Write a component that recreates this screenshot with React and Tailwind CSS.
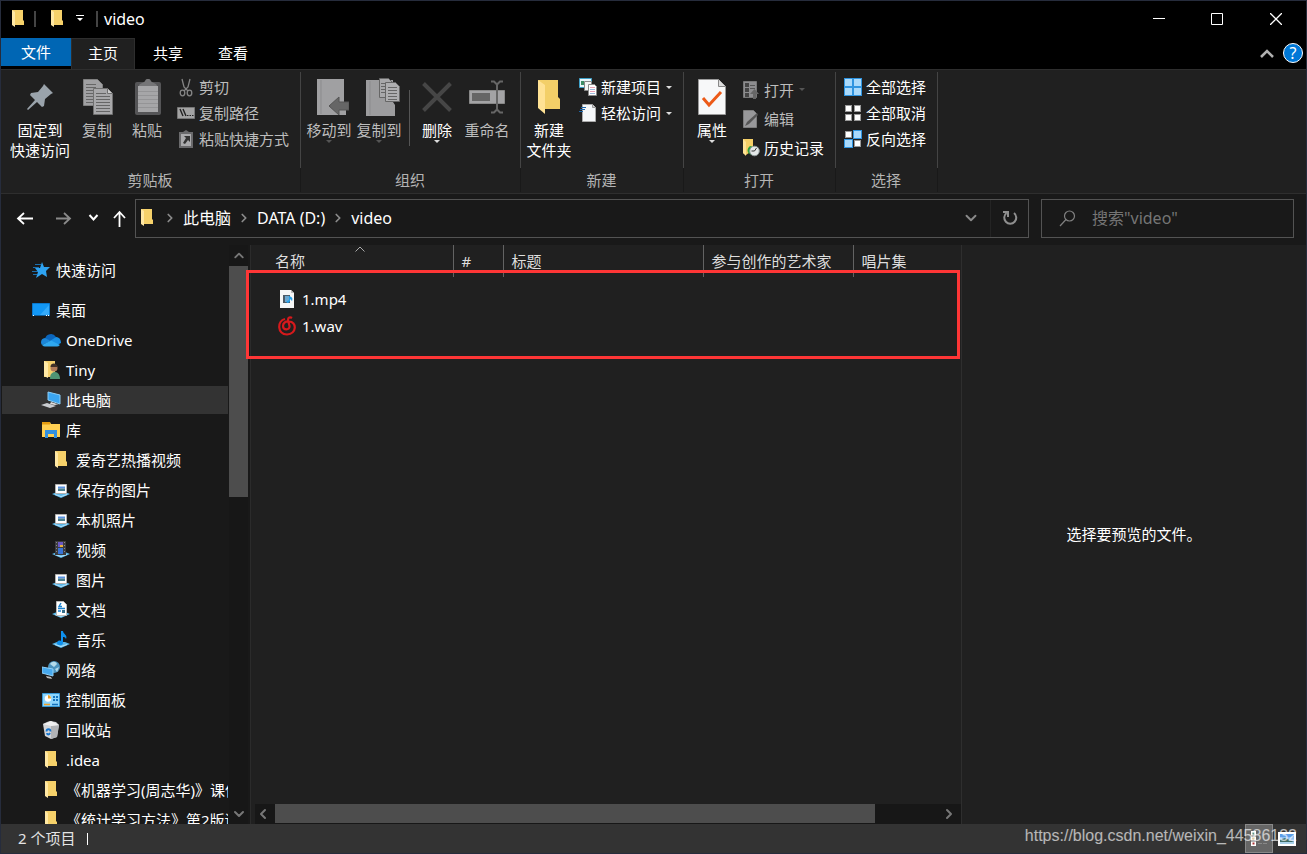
import { ChevronDown, ChevronLeft, ChevronRight, ChevronUp } from "lucide-react";

/* ---------- icons ---------- */

function FolderIcon() {
  return (
    <svg width="14" height="18" viewBox="0 0 14 18">
      <path d="M1 0h11v10l1 1v4H4z" fill="#f6d16a" />
      <path d="M1 0l3 2v15l-3-2z" fill="#ffe8a4" />
    </svg>
  );
}

function BigFolderIcon() {
  return (
    <svg width="24" height="36" viewBox="0 0 24 36">
      <path d="M1 1h20v17l2 2v10H7z" fill="#f3cf68" />
      <path d="M1 1l7 5v29l-7-6z" fill="#ffe294" />
    </svg>
  );
}

function PinIcon() {
  return (
    <svg width="28" height="28" viewBox="0 0 28 28" fill="#9aa3ab">
      <path d="M18 1l9 9-2 1-6 5-1 7-2 1-5-5-9 8-1-1 8-9-5-5 1-2 7-1 5-6z" />
    </svg>
  );
}

function SheetLines({ x, y, w, n }) {
  return Array.from({ length: n }, (_, i) => (
    <path key={i} d={`M${x} ${y + i * 3}h${w}`} stroke="#666" />
  ));
}

function CopyIcon() {
  return (
    <svg width="30" height="36" viewBox="0 0 30 36" className="ml-[2px]">
      <path d="M.5.5h14l5 5v21H.5z" fill="#a0a0a2" stroke="#808080" />
      <SheetLines x={3} y={5.5} w={10} n={7} />
      <path d="M10.500 9.500h14l5 5v21h-19z" fill="#a8a8aa" stroke="#707070" />
      <path d="M24.500 9.500v5h5" fill="#ccc" stroke="#707070" />
      <SheetLines x={13} y={14.500} w={10} n={1} />
      <SheetLines x={13} y={17.500} w={14} n={6} />
    </svg>
  );
}

function PasteIcon() {
  return (
    <svg width="26" height="36" viewBox="0 0 26 36" className="ml-[2px]">
      <rect y="3" width="26" height="33" rx="2" fill="#555557" />
      <path d="M3 7h20v26H3z" fill="#a6a6a8" />
      <path d="M4 7c0-3 5-3 6-5 1-3 5-3 6 0 1 2 6 2 6 5z" fill="#757577" />
      <path d="M3 12.500h20M3 16.500h20M3 20.500h20M3 24.500h20M3 28.500h20" stroke="#949496" />
    </svg>
  );
}

function CutIcon() {
  return (
    <svg width="14" height="19" viewBox="0 0 14 19" fill="none" stroke="#858585" strokeWidth="1.300">
      <path d="M3 1l2 8 4 4M11 1L9 9l-4 4" />
      <ellipse cx="3.500" cy="15" rx="2.300" ry="2.800" />
      <ellipse cx="10.500" cy="15" rx="2.300" ry="2.800" />
    </svg>
  );
}

function CopyPathIcon() {
  return (
    <svg width="18" height="12" viewBox="0 0 18 12">
      <path d="M.5.5h17v11H.5z" fill="#a3a3a3" stroke="#777" />
      <path d="M3 2l3 7M6 2l3 7" stroke="#222" strokeWidth="1.400" />
      <path d="M10 8.500h1.500m1 0H14m1 0h1.500" stroke="#222" />
    </svg>
  );
}

function PasteShortcutIcon() {
  return (
    <svg width="14" height="18" viewBox="0 0 14 18">
      <path d="M0 2h4l3-2 3 2h4v16H0z" fill="#6a6a6c" />
      <path d="M2 4h10v12H2z" fill="#aaaaac" />
      <path d="M5 6h6v6L9 10l-3 4-2-1 3-5z" fill="#333" />
    </svg>
  );
}

function MoveToIcon() {
  return (
    <svg width="32" height="36" viewBox="0 0 32 36" className="ml-2 shrink-0">
      <path d="M0 0h27v24l2 2v10H0z" fill="#a0a0a2" />
      <path d="M4 1v34" stroke="#8b8b8d" />
      <path d="M12 27l10-9v5h10v8H22v5z" fill="#666" stroke="#555" />
    </svg>
  );
}

function CopyToIcon() {
  return (
    <svg width="34" height="38" viewBox="0 0 34 38" className="ml-2 shrink-0">
      <path d="M0 2h27v22l2 3v11H0z" fill="#9c9c9e" />
      <path d="M4 3v34" stroke="#8b8b8d" />
      <path d="M13.500.5h9l5 5v14h-14z" fill="#a8a8aa" stroke="#666" />
      <SheetLines x={15} y={5.500} w={4} n={4} />
      <path d="M19.500 4.500h10l4 4v15h-14z" fill="#aeaeb0" stroke="#666" />
      <SheetLines x={22} y={9.500} w={9} n={5} />
    </svg>
  );
}

function DeleteIcon() {
  return (
    <svg width="30" height="30" viewBox="0 0 30 30" stroke="#464646" strokeWidth="4">
      <path d="M1.500 1.500l27 27M28.500 1.500l-27 27" />
    </svg>
  );
}

function RenameIcon() {
  return (
    <svg width="36" height="34" viewBox="0 0 36 34" fill="none">
      <path d="M.5 10.500h35v13H.5z" fill="#a3a3a5" stroke="#888" />
      <path d="M3 13h18v8H3z" fill="#666" />
      <path d="M22 1.500h3l3 3 3-3h3M22 32.500h3l3-3 3 3h3M28 4v26" stroke="#666" strokeWidth="2" />
    </svg>
  );
}

function NewItemIcon() {
  return (
    <svg width="18" height="18" viewBox="0 0 18 18">
      <path d="M.5.5h12v9H.5z" fill="#e9f6fb" stroke="#3ea0c8" />
      <path d="M2 3h3v4H2z" fill="#3c8c64" />
      <path d="M5.500 3.500h7v9h-7z" fill="#f4f4f4" stroke="#888" />
      <path d="M9.500 6.500h6l2 2v9h-8z" fill="#fff" stroke="#888" />
      <path d="M11 9.500h5M11 13.500h5" stroke="#e9a0b4" />
      <path d="M11 11.500h5M11 15.500h5" stroke="#9bb8dc" />
    </svg>
  );
}

function EasyAccessIcon() {
  return (
    <svg width="18" height="18" viewBox="0 0 18 18">
      <path d="M3.500.5h10l3 3v14h-13z" fill="#f5f7f9" stroke="#aaa" />
      <path d="M13.500.5v3h3" fill="#ccc" stroke="#999" />
      <path d="M2 3.500h5M1 5.500h5M0 7.500h4" stroke="#1d64a8" />
    </svg>
  );
}

function PropertiesIcon() {
  return (
    <svg width="28" height="36" viewBox="0 0 28 36">
      <path d="M.5.5h20l7 7v28H.5z" fill="#f7f8f9" stroke="#9a9a9a" />
      <path d="M20.500.5v7h7" fill="#ddd" stroke="#888" />
      <path d="M5 19l6 7 12-13" fill="none" stroke="#ec5a18" strokeWidth="3" />
    </svg>
  );
}

function OpenIcon() {
  return (
    <svg width="16" height="18" viewBox="0 0 16 18">
      <path d="M.5.500h13v16H.5z" fill="#8d8d8f" stroke="#777" />
      <path d="M2 2h4v4H2zM2 7h4v4H2zM2 12h4v4H2z" fill="#444" />
      <path d="M7 4.500h5M7 7.500h5" stroke="#555" />
      <path d="M11.500 8l4.500 5h-3v5h-3v-5H7z" fill="#666" />
    </svg>
  );
}

function EditIcon() {
  return (
    <svg width="16" height="18" viewBox="0 0 16 18">
      <path d="M.5.500h10l3 3v14H.5z" fill="#98989a" stroke="#7c7c7c" />
      <path d="M2 16l2-4 10-9 1 2-9 9z" fill="#555" />
    </svg>
  );
}

function HistoryIcon() {
  return (
    <svg width="18" height="18" viewBox="0 0 18 18">
      <path d="M1 0h10v11l-7 5-3-2z" fill="#f5cf66" />
      <path d="M1 0l3 3v14l-3-3z" fill="#ffe394" />
      <path d="M8 7c-4 3-3 8 2 9l2-8z" fill="#2aa13c" />
      <circle cx="12.500" cy="12" r="4.800" fill="#e4e8e8" stroke="#8d9898" />
      <path d="M12.500 12l2-3M12.500 12h-3" stroke="#333" />
    </svg>
  );
}

const TILES = [[1, 1], [10, 1], [1, 10], [10, 10]];

function SelectIcon({ selected }) {
  return (
    <svg width="18" height="18" viewBox="0 0 18 18">
      {TILES.map(([x, y], i) =>
        selected.includes(i) ? (
          <g key={i}>
            <rect x={x - 1} y={y - 1} width="9" height="9" fill="#2f94e0" />
            <rect x={x} y={y} width="7" height="7" fill="#a9d9fb" />
          </g>
        ) : (
          <rect key={i} x={x + 0.5} y={y + 0.5} width="6" height="6" fill="#fff" stroke="#999" />
        )
      )}
    </svg>
  );
}

function QuickAccessIcon() {
  return (
    <svg width="18" height="16" viewBox="0 0 18 16">
      <path d="M3 2.500h6M1 5.500h6M0 9.500h6M1 12.500h4" stroke="#1b6fae" />
      <path d="M10 0l2 5h6l-4 4 1 6-5-3-6 4 2-6-3-4h5z" fill="#2ea3f2" />
    </svg>
  );
}

function DesktopIcon() {
  return (
    <svg width="18" height="14" viewBox="0 0 18 14">
      <path d="M.5.500h17v12H.5z" fill="#1297f5" stroke="#0a78cc" />
      <path d="M8 12L17 2v10z" fill="#35abfb" />
      <path d="M1 12.500h16" stroke="#0c5e9e" />
      <path d="M1 12.500h1m12 0h1m1 0h1" stroke="#fff" />
    </svg>
  );
}

function OneDriveIcon() {
  return (
    <svg width="20" height="14" viewBox="0 0 20 14">
      <path d="M4 6a6 6 0 0 1 11-2l-2 5z" fill="#0b66bd" />
      <path d="M4 5c-4 0-5 5-3 7l9-4z" fill="#1b86d8" />
      <path d="M9 8l6-4c4 0 5 4 5 6l-4 2z" fill="#1a8fe4" />
      <path d="M1 12l9-4.500L19 12c-1 1-2 1.500-3 1.500H4C3 13.500 2 13 1 12z" fill="#2fa8f0" />
    </svg>
  );
}

function UserFolderIcon() {
  return (
    <svg width="18" height="18" viewBox="0 0 18 18">
      <path d="M2 0h11v16H2z" fill="#f5d06d" />
      <path d="M2 0l4 2v15l-4-2z" fill="#ffe9a6" />
      <path d="M8 18c0-5 2-7 5-7s5 3 5 7z" fill="#4f9474" />
      <circle cx="12" cy="7" r="3.500" fill="#b07a58" />
      <path d="M8.500 6c0-5 7-4 7 0z" fill="#3f3028" />
    </svg>
  );
}

function ThisPcIcon() {
  return (
    <svg width="20" height="18" viewBox="0 0 20 18">
      <path d="M7 1l12 3v9L7 9z" fill="#3ba5f0" stroke="#8ccdf5" />
      <path d="M10 11l6 2 2 0-4 1-5-1z" fill="#ddd" />
      <path d="M0 14l6-2 9 3-6 2z" fill="#c9ccd0" />
    </svg>
  );
}

function LibraryIcon() {
  return (
    <svg width="18" height="16" viewBox="0 0 18 16">
      <path d="M0 0h8l1 2h9v13H0z" fill="#ffcf52" />
      <path d="M0 0h8v2.500H0z" fill="#e39b10" />
      <path d="M3 8h12v8h-3v-4H6v4H3z" fill="#3290df" />
    </svg>
  );
}

function Tray() {
  return (
    <>
      <path d="M0 13l5-2h8l5 2-9 4z" fill="#58b6e8" />
      <path d="M3 13.500l6 2 6-2" fill="none" stroke="#b3e2fa" />
    </>
  );
}

function PictureLibIcon() {
  return (
    <svg width="18" height="18" viewBox="0 0 18 18">
      <Tray />
      <path d="M3.500 3.500h11v9h-11z" fill="#fff" stroke="#b0b0b0" />
      <path d="M5 5h8v6H5z" fill="#fff" />
      <path d="M6 5.500h7v2H6z" fill="#5a92e4" />
      <path d="M6 7.500h7V10H6z" fill="#4b8190" />
    </svg>
  );
}

function VideoLibIcon() {
  return (
    <svg width="18" height="18" viewBox="0 0 18 18">
      <Tray />
      <path d="M3 0h11v14H3z" fill="#3c3c3e" />
      <path d="M6 1h5v5H6z" fill="#6a58c4" />
      <path d="M8 4h3v2H8z" fill="#e7b13a" />
      <path d="M6 7h5v6H6z" fill="#3873d4" />
      <path d="M4.500 1v12M12.500 1v12" stroke="#888" strokeDasharray="1 2" />
    </svg>
  );
}

function DocLibIcon() {
  return (
    <svg width="18" height="18" viewBox="0 0 18 18">
      <Tray />
      <path d="M4.500.500h7l3 3v11h-10z" fill="#fff" stroke="#bbb" />
      <path d="M9 2L7 5.500h3M6 7.500h7M6 10h3" fill="none" stroke="#1d83d0" strokeWidth="1.400" />
      <path d="M10 9h3v3h-3z" fill="#356d8a" />
    </svg>
  );
}

function MusicLibIcon() {
  return (
    <svg width="18" height="18" viewBox="0 0 18 18">
      <Tray />
      <path d="M9 0h2c0 3 5 4 3 8-1-2-2-2-3-2v6c0 3-6 3-6 0 0-2 2-3 4-2z" fill="#0e90ee" />
    </svg>
  );
}

function NetworkIcon() {
  return (
    <svg width="18" height="18" viewBox="0 0 18 18">
      <circle cx="12" cy="6" r="6" fill="#4c93bd" />
      <path d="M8 3c2-3 6-3 7 0l-3 3zM13 8l4-2-2 5z" fill="#b4dbea" />
      <path d="M0 6l11 2v7L0 12z" fill="#47a9ee" stroke="#8fd0f8" />
      <path d="M4 15l5 1 1 2-5-1z" fill="#bbb" />
    </svg>
  );
}

function ControlPanelIcon() {
  return (
    <svg width="18" height="14" viewBox="0 0 18 14">
      <path d="M.5.500h17v13H.5z" fill="#8dd5fb" stroke="#3798d6" />
      <circle cx="6" cy="5.500" r="3.200" fill="#fff" />
      <path d="M6 2a3.500 3.500 0 0 1 3 3.500H6z" fill="#f0a024" />
      <path d="M11 3h2v2h-2zM14 3h2v2h-2zM11 6h2v2h-2zM14 6h2v2h-2z" fill="#1573bd" />
      <path d="M2 11.500h6" stroke="#f0a024" strokeWidth="1.500" />
      <path d="M10 11.500h6" stroke="#1573bd" strokeWidth="1.500" />
    </svg>
  );
}

function RecycleIcon() {
  return (
    <svg width="16" height="18" viewBox="0 0 16 18">
      <path d="M0 3l4-2 3-1 6 1 3 3-2 12-6 2-6-3z" fill="#d3d5d8" />
      <path d="M8 5l8-1-2 12-6 2z" fill="#b1b3b6" />
      <path d="M0 3l8 2 8-1-4-2-4-2-4 2z" fill="#f0f0f0" />
      <path d="M3.500 10.500c0-3 4-3 4 0M7 12c-1 2-3 2-3 0" fill="none" stroke="#1574ce" strokeWidth="1.800" />
    </svg>
  );
}

function Mp4Icon() {
  return (
    <svg width="14" height="18" viewBox="0 0 14 18">
      <path d="M0 0h11l3 3v15H0z" fill="#f6f6f6" />
      <path d="M11 0v3h3z" fill="#bbb" />
      <path d="M3 5h7v8H3z" fill="#4c5b68" />
      <path d="M5 6h4v6H5z" fill="#6ba6cf" />
      <path d="M9 6c3 1 4 2 3 5l-2-2v2c-1 3-5 2-3 0l2-1z" fill="#28a0e8" />
    </svg>
  );
}

function NetEaseIcon() {
  return (
    <svg width="18" height="20" viewBox="0 0 18 20" fill="none" stroke="#d6191c" strokeWidth="2.200">
      <path d="M7 3C-1 5-1 18 9 18.500c10-.5 10-13 2-13-4-.5-6 2-6 4.500 0 4.500 7 4.500 6.500 0L10 4c0-2.500 2-3.500 4-2" />
    </svg>
  );
}

function DetailsViewIcon() {
  return (
    <svg width="18" height="18" viewBox="0 0 18 18">
      <path d="M1 1h5v15H1z" fill="#fff" />
      <path d="M2.500 2.500h2v2h-2z" fill="#4d7a55" />
      <path d="M2.500 7.500h2v2h-2z" fill="#c89430" />
      <path d="M2.500 12.500h2v2h-2z" fill="#a93333" />
      <path d="M1 6h5M1 11h5" stroke="#666" />
      <path d="M8 13.500h4m1 0h4" stroke="#888" />
    </svg>
  );
}

function PreviewViewIcon() {
  return (
    <svg width="18" height="14" viewBox="0 0 18 14">
      <path d="M1 1h16v12H1z" fill="#8fc0f2" stroke="#fff" strokeWidth="2" />
      <path d="M2 2h14v3H2z" fill="#5c9de8" />
      <path d="M2 8l5-2 9 4v1H2z" fill="#406d66" />
      <path d="M2 10h14v2H2z" fill="#a9d2ea" />
    </svg>
  );
}

function NavArrow({ d, color }) {
  return (
    <svg width="17" height="17" viewBox="0 0 17 17" fill="none" stroke={color} strokeWidth="1.800">
      <path d={d} />
    </svg>
  );
}

function Caret({ className }) {
  return (
    <svg width="6" height="3" viewBox="0 0 6 3" className={className}>
      <path d="M0 0h6L3 3z" fill="currentColor" />
    </svg>
  );
}

/* ---------- ribbon ---------- */

function RibbonGroup({ label, className, children }) {
  return (
    <section aria-label={label} className={`flex shrink-0 flex-col ${className}`}>
      <div className="mt-[2px] flex h-24 border-r border-[#444]">{children}</div>
      <div className="mb-px flex flex-1 items-center justify-center border-r border-[#191919] pr-px text-[#b4b4b4]">
        {label}
      </div>
    </section>
  );
}

function BigButton({ icon, lines, disabled, caret, className }) {
  return (
    <button
      type="button"
      disabled={disabled}
      className={`flex shrink-0 flex-col items-center pt-[2px] leading-5 ${disabled ? "text-[#bdbdbd]" : "text-white"} ${className}`}
    >
      <span className="flex h-[46px] items-center justify-center">{icon}</span>
      {lines.map((line) => (
        <span key={line} className="whitespace-nowrap">{line}</span>
      ))}
      {caret ? <Caret className={disabled ? "text-[#555]" : "text-[#ddd]"} /> : null}
    </button>
  );
}

function SmallButton({ icon, label, disabled, caret, className = "h-[26px]" }) {
  return (
    <button
      type="button"
      disabled={disabled}
      className={`flex items-center gap-1 whitespace-nowrap ${disabled ? "text-[#bdbdbd]" : "text-white"} ${className}`}
    >
      <span className="flex w-[18px] justify-center">{icon}</span>
      {label}
      {caret ? <Caret className={`ml-px ${disabled ? "text-[#555]" : "text-[#ddd]"}`} /> : null}
    </button>
  );
}

function Ribbon() {
  return (
    <div className="flex h-[125px] shrink-0 overflow-hidden border-y border-[#2e2e2e] bg-[#202020]">
      <RibbonGroup label="剪贴板" className="w-[300px]">
        <BigButton icon={<PinIcon />} lines={["固定到", "快速访问"]} className="ml-[7px] w-16" />
        <BigButton icon={<CopyIcon />} lines={["复制"]} disabled className="w-[50px]" />
        <BigButton icon={<PasteIcon />} lines={["粘贴"]} disabled className="w-[50px]" />
        <div className="ml-[5px] flex flex-col pt-[2px]">
          <SmallButton icon={<CutIcon />} label="剪切" disabled />
          <SmallButton icon={<CopyPathIcon />} label="复制路径" disabled />
          <SmallButton icon={<PasteShortcutIcon />} label="粘贴快捷方式" disabled />
        </div>
      </RibbonGroup>

      <RibbonGroup label="组织" className="w-[220px]">
        <BigButton icon={<MoveToIcon />} lines={["移动到"]} disabled caret className="ml-[3px] w-[50px]" />
        <BigButton icon={<CopyToIcon />} lines={["复制到"]} disabled caret className="w-[50px]" />
        <div className="ml-[5px] mr-[2px] mt-[18px] h-14 w-px bg-[#555]" />
        <BigButton icon={<DeleteIcon />} lines={["删除"]} caret className="w-[50px]" />
        <BigButton icon={<RenameIcon />} lines={["重命名"]} disabled className="w-[50px]" />
      </RibbonGroup>

      <RibbonGroup label="新建" className="w-[163px]">
        <BigButton icon={<BigFolderIcon />} lines={["新建", "文件夹"]} className="ml-[2px] w-[52px]" />
        <div className="ml-1 flex flex-col pt-[2px]">
          <SmallButton icon={<NewItemIcon />} label="新建项目" caret />
          <SmallButton icon={<EasyAccessIcon />} label="轻松访问" caret />
        </div>
      </RibbonGroup>

      <RibbonGroup label="打开" className="w-[152px]">
        <BigButton icon={<PropertiesIcon />} lines={["属性"]} caret className="ml-[2px] w-[52px]" />
        <div className="ml-1 flex flex-col pt-[3px]">
          <SmallButton icon={<OpenIcon />} label="打开" disabled caret className="h-[29px]" />
          <SmallButton icon={<EditIcon />} label="编辑" disabled className="h-[29px]" />
          <SmallButton icon={<HistoryIcon />} label="历史记录" className="h-[29px]" />
        </div>
      </RibbonGroup>

      <RibbonGroup label="选择" className="w-[102px]">
        <div className="ml-2 flex flex-col pt-[2px]">
          <SmallButton icon={<SelectIcon selected={[0, 1, 2, 3]} />} label="全部选择" />
          <SmallButton icon={<SelectIcon selected={[]} />} label="全部取消" />
          <SmallButton icon={<SelectIcon selected={[1, 2]} />} label="反向选择" />
        </div>
      </RibbonGroup>
    </div>
  );
}

/* ---------- window chrome ---------- */

function TitleBar() {
  return (
    <header className="flex h-[37px] shrink-0 items-center bg-black pb-[2px]">
      <div className="flex items-center pl-[10px]">
        <FolderIcon />
        <div className="ml-[9px] h-4 w-[2px] bg-[#444]" />
        <button type="button" aria-label="新建文件夹" className="ml-[14px]">
          <FolderIcon />
        </button>
        <button type="button" aria-label="自定义快速访问工具栏" className="ml-3">
          <svg width="8" height="7" viewBox="0 0 8 7" fill="#fff">
            <path d="M0 0h8v1H0zM1 3h6L4 6z" />
          </svg>
        </button>
        <div className="ml-3 h-4 w-[2px] bg-[#444]" />
        <h1 className="ml-[6px] text-base">video</h1>
      </div>
      <div className="ml-auto flex self-stretch">
        <button type="button" aria-label="最小化" className="flex w-[58px] items-center justify-center">
          <svg width="12" height="12" stroke="#fff"><path d="M0 5.500h12" /></svg>
        </button>
        <button type="button" aria-label="最大化" className="flex w-[58px] items-center justify-center">
          <svg width="12" height="12" fill="none" stroke="#fff"><path d="M.5.500h11v11H.5z" /></svg>
        </button>
        <button type="button" aria-label="关闭" className="flex w-[60px] items-center justify-center">
          <svg width="12" height="12" stroke="#fff" strokeWidth="1.300"><path d="M0 0l12 12M12 0L0 12" /></svg>
        </button>
      </div>
    </header>
  );
}

function TabBar() {
  return (
    <nav className="flex h-[31px] shrink-0 items-start bg-black">
      <button type="button" className="h-7 w-[70px] bg-[#0066b4]">文件</button>
      <button type="button" className="-mb-px h-8 w-16 border border-b-0 border-[#2e2e2e] bg-[#202020] pb-[3px]">主页</button>
      <button type="button" className="h-[30px] w-[66px]">共享</button>
      <button type="button" className="h-[30px] w-16">查看</button>
      <div className="ml-auto flex h-[30px] items-center gap-[9px] pr-[3px]">
        <button type="button" aria-label="最小化功能区">
          <svg width="14" height="9" fill="none" stroke="#b0b0b0" strokeWidth="2.500"><path d="M1 8l6-6 6 6" /></svg>
        </button>
        <button
          type="button"
          aria-label="帮助"
          className="flex size-5 items-center justify-center rounded-full border border-white bg-[#0078d7] text-base"
        >
          ?
        </button>
      </div>
    </nav>
  );
}

function AddressBar() {
  return (
    <div className="flex h-[51px] shrink-0 items-center pb-[3px] pr-3">
      <div className="flex w-[134px] items-center pl-[15px]">
        <button type="button" aria-label="后退"><NavArrow d="M17 8.500H2M8 3L2 8.500 8 14" color="#fff" /></button>
        <button type="button" aria-label="前进" className="ml-[22px]">
          <NavArrow d="M1 8.500h14M9 3l6 5.500L9 14" color="#8a8a8a" />
        </button>
        <button type="button" aria-label="最近浏览的位置" className="ml-4">
          <svg width="11" height="8" fill="none" stroke="#fff" strokeWidth="2"><path d="M1.500 1l4 4.500 4-4.500" /></svg>
        </button>
        <button type="button" aria-label="上移" className="ml-3">
          <NavArrow d="M8.500 17V2M3 8l5.500-6L14 8" color="#fff" />
        </button>
      </div>
      <div className="flex h-[39px] min-w-0 flex-1 items-center border border-[#535353] pl-1">
        <FolderIcon />
        <nav aria-label="路径" className="ml-[3px] flex">
          {["此电脑", "DATA (D:)", "video"].map((crumb) => (
            <span key={crumb} className="flex items-center">
              <ChevronRight size={14} strokeWidth={3} color="#8a8a8a" className="mx-[6px]" />
              <a href="#" className="whitespace-nowrap text-base">{crumb}</a>
            </span>
          ))}
        </nav>
        <button type="button" aria-label="以前的位置" className="ml-auto flex h-full w-[38px] items-center justify-center">
          <ChevronDown size={18} strokeWidth={2.5} color="#8a8a8a" />
        </button>
        <button
          type="button"
          aria-label="刷新"
          className="flex h-full w-[38px] items-center justify-center border-l border-[#242424]"
        >
          <svg width="16" height="16" viewBox="0 0 16 16" fill="none" stroke="#8f8f8f" strokeWidth="2">
            <path d="M12 3A6 6 0 1 1 4.500 3" />
            <path d="M1 2h5v5" />
          </svg>
        </button>
      </div>
      <label className="ml-3 flex h-[39px] w-[253px] items-center border border-[#535353] pl-[17px]">
        <svg width="17" height="17" viewBox="0 0 17 17" fill="none" stroke="#808080" strokeWidth="1.200" className="shrink-0">
          <circle cx="10.500" cy="6" r="5" />
          <path d="M7 9.500L1 16" />
        </svg>
        <input
          type="search"
          aria-label="搜索"
          placeholder={'搜索"video"'}
          className="ml-4 w-full min-w-0 bg-transparent text-base outline-none placeholder:text-[#757575]"
        />
      </label>
    </div>
  );
}

/* ---------- panes ---------- */

const TREE = [
  { label: "快速访问", icon: <QuickAccessIcon />, level: 0, spaced: true },
  { label: "桌面", icon: <DesktopIcon />, level: 0 },
  { label: "OneDrive", icon: <OneDriveIcon />, level: 1 },
  { label: "Tiny", icon: <UserFolderIcon />, level: 1 },
  { label: "此电脑", icon: <ThisPcIcon />, level: 1, selected: true },
  { label: "库", icon: <LibraryIcon />, level: 1 },
  { label: "爱奇艺热播视频", icon: <FolderIcon />, level: 2 },
  { label: "保存的图片", icon: <PictureLibIcon />, level: 2 },
  { label: "本机照片", icon: <PictureLibIcon />, level: 2 },
  { label: "视频", icon: <VideoLibIcon />, level: 2 },
  { label: "图片", icon: <PictureLibIcon />, level: 2 },
  { label: "文档", icon: <DocLibIcon />, level: 2 },
  { label: "音乐", icon: <MusicLibIcon />, level: 2 },
  { label: "网络", icon: <NetworkIcon />, level: 1 },
  { label: "控制面板", icon: <ControlPanelIcon />, level: 1 },
  { label: "回收站", icon: <RecycleIcon />, level: 1 },
  { label: ".idea", icon: <FolderIcon />, level: 1 },
  { label: "《机器学习(周志华)》课件", icon: <FolderIcon />, level: 1 },
  { label: "《统计学习方法》第2版课件", icon: <FolderIcon />, level: 1 },
];

const INDENT = ["pl-[29px]", "pl-[39px]", "pl-[49px]"];

function Sidebar() {
  return (
    <aside className="flex w-[250px] shrink-0 border-r border-[#2b2b2b]">
      <ul className="flex min-w-0 flex-1 flex-col gap-[2px] overflow-hidden pl-px pr-px pt-[11px]">
        {TREE.map((item) => (
          <li key={item.label} className={item.spaced ? "mb-[10px]" : ""}>
            <a
              href="#"
              className={`flex h-7 items-center gap-[5px] overflow-hidden whitespace-nowrap ${INDENT[item.level]} ${item.selected ? "bg-[#333]" : ""}`}
            >
              <span className="flex w-5 shrink-0 justify-center">{item.icon}</span>
              {item.label}
            </a>
          </li>
        ))}
      </ul>
      <div className="mr-[2px] flex w-[19px] shrink-0 flex-col items-center bg-[#171717]">
        <ChevronUp size={16} strokeWidth={3} color="#777" className="my-[3px] h-[15px] shrink-0" />
        <div className="h-[231px] w-full bg-[#4d4d4d]" />
        <ChevronDown size={16} strokeWidth={3} color="#777" className="mb-[2px] mt-auto shrink-0" />
      </div>
    </aside>
  );
}

const FILES = [
  { name: "1.mp4", icon: <Mp4Icon /> },
  { name: "1.wav", icon: <NetEaseIcon /> },
];

function FileList() {
  return (
    <main className="relative flex min-w-0 flex-1 flex-col bg-[#202020]">
      <table className="w-full table-fixed border-collapse text-left">
        <colgroup>
          <col className="w-[202px]" />
          <col className="w-[50px]" />
          <col className="w-[200px]" />
          <col className="w-[150px]" />
          <col />
        </colgroup>
        <thead>
          <tr className="h-8 text-[#dedede]">
            <th className="relative border-r border-[#636363] pl-6 font-normal">
              名称
              <svg width="10" height="6" fill="none" stroke="#aaa" className="absolute left-[104px] top-px">
                <path d="M.5 5.500L5 1l4.500 4.500" />
              </svg>
            </th>
            <th className="border-r border-[#636363] pl-2 font-normal">#</th>
            <th className="border-r border-[#636363] pl-2 font-normal">标题</th>
            <th className="whitespace-nowrap border-r border-[#636363] pl-2 font-normal">参与创作的艺术家</th>
            <th className="pl-2 font-normal">唱片集</th>
          </tr>
        </thead>
        <tbody>
          <tr className="h-2" aria-hidden="true" />
          {FILES.map((file) => (
            <tr key={file.name} className="h-[27px]">
              <td colSpan={5} className="pl-[27px]">
                <a href="#" className="flex items-center gap-[6px]">
                  <span className="flex w-[18px] justify-center">{file.icon}</span>
                  {file.name}
                </a>
              </td>
            </tr>
          ))}
        </tbody>
      </table>

      {/* highlight around the two files */}
      <div className="pointer-events-none absolute -left-[5px] right-px top-[25px] h-[89px] border-[3px] border-[#ff3636]" />

      <div className="ml-1 mt-auto flex h-5 items-center bg-[#171717] pb-px">
        <ChevronLeft size={16} strokeWidth={3} color="#777" className="mr-1 shrink-0" />
        <div className="h-full w-[85%] bg-[#4d4d4d]" />
        <ChevronRight size={16} strokeWidth={3} color="#777" className="ml-auto mr-1 shrink-0" />
      </div>
    </main>
  );
}

function PreviewPane() {
  return (
    <section className="flex w-[345px] shrink-0 items-center justify-center border-l border-[#2e2e2e] bg-[#202020] pb-[2px]">
      <p>选择要预览的文件。</p>
    </section>
  );
}

function StatusBar() {
  return (
    <footer className="relative flex h-[29px] shrink-0 items-center bg-[#333] pl-[17px] pr-[10px] text-[#e4e4e4]">
      <span className="pb-[2px]">2 个项目</span>
      <span className="ml-3 h-3 w-px bg-white" />
      <button
        type="button"
        aria-label="详细信息"
        className="ml-auto flex h-full w-7 items-center justify-center border border-[#888] bg-[#666]"
      >
        <DetailsViewIcon />
      </button>
      <button type="button" aria-label="大缩略图" className="ml-[5px]">
        <PreviewViewIcon />
      </button>
      <span className="absolute right-[9px] top-0 whitespace-nowrap font-['Liberation_Sans',sans-serif] text-base text-white/65">
        https://blog.csdn.net/weixin_44586132
      </span>
    </footer>
  );
}

export default function App() {
  return (
    <div className="flex h-screen flex-col overflow-hidden border border-[#262c3c] bg-[#191919] font-['Noto_Sans','Noto_Sans_CJK_SC',sans-serif] text-[15px] leading-5 text-white">
      <TitleBar />
      <TabBar />
      <Ribbon />
      <AddressBar />
      <div className="flex min-h-0 flex-1">
        <Sidebar />
        <FileList />
        <PreviewPane />
      </div>
      <StatusBar />
    </div>
  );
}
